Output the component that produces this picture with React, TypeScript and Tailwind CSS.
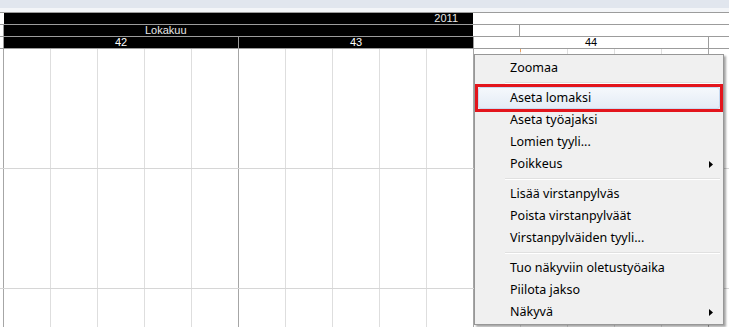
import React from 'react';

type MenuEntry =
  | { sep: true }
  | { sep?: false; label: string; sub?: boolean; active?: boolean };

const MENU: MenuEntry[] = [
  { label: 'Zoomaa' },
  { sep: true },
  { label: 'Aseta lomaksi', active: true },
  { label: 'Aseta työajaksi' },
  { label: 'Lomien tyyli...' },
  { label: 'Poikkeus', sub: true },
  { sep: true },
  { label: 'Lisää virstanpylväs' },
  { label: 'Poista virstanpylväät' },
  { label: 'Virstanpylväiden tyyli...' },
  { sep: true },
  { label: 'Tuo näkyviin oletustyöaika' },
  { label: 'Piilota jakso' },
  { label: 'Näkyvä', sub: true },
];

// 4 visible weeks, 5 days each
const DAYS = Array.from({ length: 20 }, (_, i) => i);

const GridRow: React.FC<{ last?: boolean }> = ({ last }) => (
  <div className={`flex ${last ? 'flex-1' : 'h-[120px] border-b border-[#d6d6d6]'}`}>
    <div className="w-[3px] shrink-0" />
    {DAYS.map((d) => (
      <div
        key={d}
        className={`w-[47px] shrink-0 border-l ${d % 5 === 0 ? 'border-[#a6a6a6]' : 'border-[#dedede]'}`}
      />
    ))}
  </div>
);

const Arrow = () => (
  <svg width="4" height="7" viewBox="0 0 4 7" className="text-black">
    <path d="M0 0L4 3.5L0 7z" fill="currentColor" />
  </svg>
);

const ContextMenu = () => (
  <div className="absolute left-[474px] top-[54px] w-[250px] border border-[#979797] bg-[#f0f0f0] pt-[2px] pb-[1px] shadow-[2px_2px_2px_rgba(0,0,0,0.35)] font-['Noto_Sans',sans-serif] text-[12.5px] text-black">
    {MENU.map((m, i) =>
      m.sep ? (
        <div key={i} className="flex h-[8px] flex-col justify-center pl-[30px] pr-[3px]">
          <div className="h-px bg-[#e0e0e0]" />
          <div className="h-px bg-white" />
        </div>
      ) : (
        <div key={i} className="relative h-[22px]">
          {m.active && (
            <div className="absolute inset-y-0 inset-x-[3px] rounded-[3px] border border-[#c7dbf2] bg-gradient-to-b from-[#f5f8fc] to-[#e4ecf6]" />
          )}
          <div className="relative flex h-full items-center pl-[35px] pr-[10px]">
            <span className="flex-1 leading-[22px]">{m.label}</span>
            {m.sub && <Arrow />}
          </div>
        </div>
      )
    )}
    {/* red highlight frame around the selected item */}
    <div className="absolute left-0 right-0 top-[29px] h-[28px] border-[3px] border-[#e3151c]" />
  </div>
);

export default function App() {
  return (
    <div className="relative flex h-[327px] w-[729px] flex-col overflow-hidden bg-white font-['Liberation_Sans',Arial,sans-serif]">
      <div className="h-[8px] bg-[#e1e6ee]" />
      <div className="h-[4px] bg-[#f3f5f8]" />

      {/* year row */}
      <div className="flex h-[12px] border-t border-[#9c9c9c] text-[11px] leading-[11px] text-[#e8e8e8]">
        <div className="w-[4px]" />
        <div className="w-[469px] bg-black pr-[15px] text-right">2011</div>
        <div className="flex-1" />
      </div>

      {/* month row */}
      <div className="flex h-[12px] border-t border-[#9c9c9c] text-[11px] leading-[11px] text-[#e8e8e8]">
        <div className="w-[3px]" />
        <div className="w-px bg-[#9c9c9c]" />
        <div className="w-[469px] bg-black pl-[141px]">Lokakuu</div>
        <div className="w-[46px]" />
        <div className="w-px bg-[#9c9c9c]" />
        <div className="flex-1" />
      </div>

      {/* week row */}
      <div className="flex h-[13px] border-y border-[#9c9c9c] text-[11px] leading-[11px]">
        <div className="w-[3px]" />
        <div className="w-px bg-[#9c9c9c]" />
        <div className="w-[234px] bg-black text-center text-white">42</div>
        <div className="w-px bg-[#9c9c9c]" />
        <div className="w-[234px] bg-black text-center text-white">43</div>
        <div className="w-px bg-[#9c9c9c]" />
        <div className="w-[234px] text-center text-black">44</div>
        <div className="w-px bg-[#9c9c9c]" />
        <div className="flex-1" />
      </div>

      <div className="relative flex flex-1 flex-col">
        <div className="absolute left-[520px] top-0 h-[3px] w-px bg-[#e8a060]" />
        <GridRow />
        <GridRow />
        <GridRow last />
      </div>

      <ContextMenu />
    </div>
  );
}
